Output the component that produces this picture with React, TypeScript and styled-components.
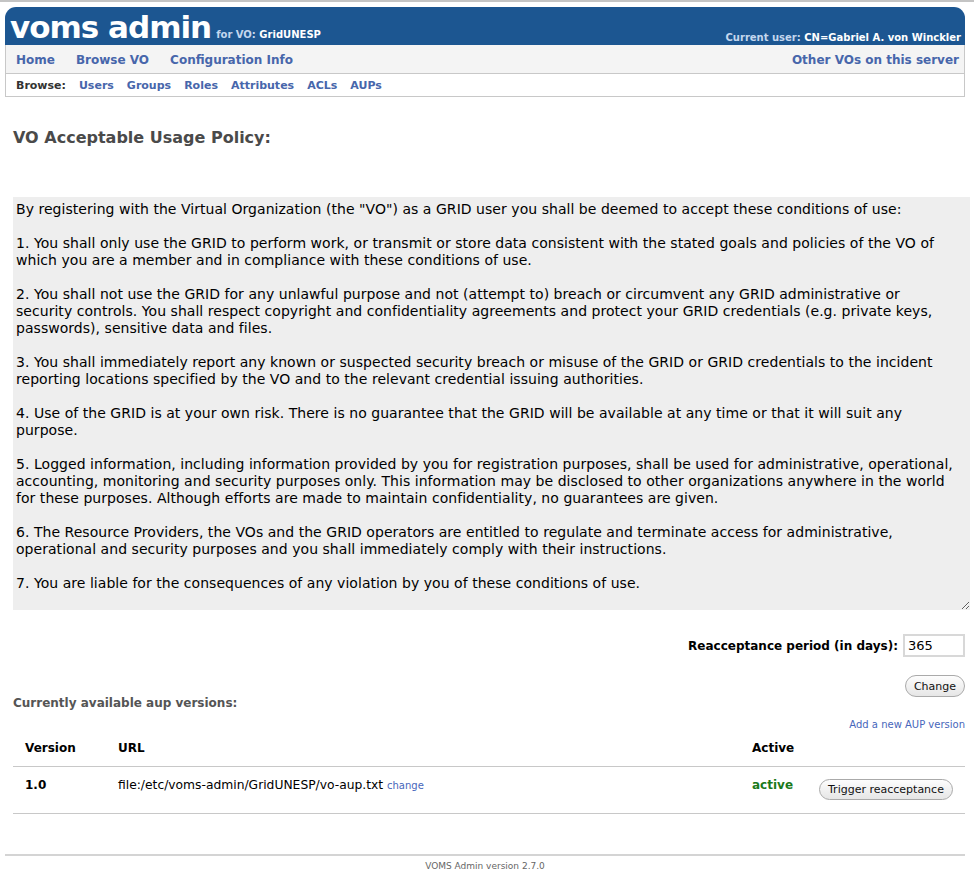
import React from 'react';
import styled, { createGlobalStyle } from 'styled-components';

const GlobalStyle = createGlobalStyle`
  body {
    margin: 0;
    border-top: 2px solid #c4c4c4;
    background: #fff;
    font-family: "DejaVu Sans", Verdana, sans-serif;
    color: #000;
  }
`;

const aupText = `By registering with the Virtual Organization (the "VO") as a GRID user you shall be deemed to accept these conditions of use:

1. You shall only use the GRID to perform work, or transmit or store data consistent with the stated goals and policies of the VO of which you are a member and in compliance with these conditions of use.

2. You shall not use the GRID for any unlawful purpose and not (attempt to) breach or circumvent any GRID administrative or security controls. You shall respect copyright and confidentiality agreements and protect your GRID credentials (e.g. private keys, passwords), sensitive data and files.

3. You shall immediately report any known or suspected security breach or misuse of the GRID or GRID credentials to the incident reporting locations specified by the VO and to the relevant credential issuing authorities.

4. Use of the GRID is at your own risk. There is no guarantee that the GRID will be available at any time or that it will suit any purpose.

5. Logged information, including information provided by you for registration purposes, shall be used for administrative, operational, accounting, monitoring and security purposes only. This information may be disclosed to other organizations anywhere in the world for these purposes. Although efforts are made to maintain confidentiality, no guarantees are given.

6. The Resource Providers, the VOs and the GRID operators are entitled to regulate and terminate access for administrative, operational and security purposes and you shall immediately comply with their instructions.

7. You are liable for the consequences of any violation by you of these conditions of use.`;

const browseLinks = ['Users', 'Groups', 'Roles', 'Attributes', 'ACLs', 'AUPs'];

export default function App() {
  return (
    <>
      <GlobalStyle />
      <Page>
        <Header>
          <Brand>
            <Logo>voms admin</Logo>
            <VoName>
              <Dim>for VO: </Dim>GridUNESP
            </VoName>
          </Brand>
          <UserInfo>
            <Dim>Current user: </Dim>CN=Gabriel A. von Winckler
          </UserInfo>
        </Header>
        <NavBar>
          <NavGroup>
            <NavLink href="#">Home</NavLink>
            <NavLink href="#">Browse VO</NavLink>
            <NavLink href="#">Configuration Info</NavLink>
          </NavGroup>
          <NavLink href="#">Other VOs on this server</NavLink>
        </NavBar>
        <BrowseBar>
          <BrowseLabel>Browse:</BrowseLabel>
          {browseLinks.map((l) => (
            <BrowseLink key={l} href="#">
              {l}
            </BrowseLink>
          ))}
        </BrowseBar>

        <Content>
          <Title>VO Acceptable Usage Policy:</Title>
          <PolicyText readOnly defaultValue={aupText} />

          <PeriodRow>
            <PeriodLabel>Reacceptance period (in days):</PeriodLabel>
            <PeriodInput defaultValue="365" />
          </PeriodRow>
          <ButtonRow>
            <PillButton>Change</PillButton>
          </ButtonRow>

          <SubTitle>Currently available aup versions:</SubTitle>
          <AddRow>
            <SmallLink href="#">Add a new AUP version</SmallLink>
          </AddRow>

          <VersionTable>
            <colgroup>
              <Col $w={93} />
              <Col $w={634} />
              <Col $w={67} />
              <Col $w={158} />
            </colgroup>
            <thead>
              <tr>
                <Th>Version</Th>
                <Th>URL</Th>
                <Th>Active</Th>
                <Th />
              </tr>
            </thead>
            <tbody>
              <tr>
                <Td>
                  <b>1.0</b>
                </Td>
                <Td>
                  <UrlText>file:/etc/voms-admin/GridUNESP/vo-aup.txt</UrlText>{' '}
                  <TinyLink href="#">change</TinyLink>
                </Td>
                <Td>
                  <ActiveText>active</ActiveText>
                </Td>
                <Td>
                  <PillButton $small>Trigger reacceptance</PillButton>
                </Td>
              </tr>
            </tbody>
          </VersionTable>
        </Content>

        <Footer>VOMS Admin version 2.7.0</Footer>
      </Page>
    </>
  );
}

const Page = styled.div`
  width: 960px;
  margin: 5px 0 0 5px;
`;

const Header = styled.div`
  display: flex;
  justify-content: space-between;
  align-items: flex-end;
  height: 38px;
  padding: 0 4px 0 5px;
  background: #1c5691;
  border-radius: 11px 11px 0 0;
  color: #fff;
`;

const Brand = styled.div`
  display: flex;
  align-items: baseline;
`;

const Logo = styled.span`
  font-size: 31px;
  font-weight: bold;
  letter-spacing: -1px;
  line-height: 36px;
`;

const VoName = styled.span`
  margin-left: 5px;
  font-size: 10px;
  font-weight: bold;
`;

const Dim = styled.span`
  color: #c4d7ee;
`;

const UserInfo = styled.div`
  font-size: 10px;
  font-weight: bold;
  padding-bottom: 2px;
`;

const NavBar = styled.div`
  display: flex;
  justify-content: space-between;
  align-items: center;
  height: 28px;
  padding: 1px 5px 0 10px;
  box-sizing: border-box;
  height: 29px;
  background: #f4f4f4;
  border: 1px solid #c8c8c8;
  border-top: none;
`;

const NavGroup = styled.div`
  display: flex;
  gap: 21px;
`;

const NavLink = styled.a`
  font-size: 12px;
  font-weight: bold;
  color: #4766ab;
  text-decoration: none;
`;

const BrowseBar = styled.div`
  display: flex;
  align-items: center;
  gap: 13px;
  height: 22px;
  padding: 0 10px;
  border: 1px solid #c8c8c8;
  border-top: none;
  font-size: 11px;
  font-weight: bold;
`;

const BrowseLabel = styled.span`
  color: #333;
`;

const BrowseLink = styled.a`
  color: #4766ab;
  text-decoration: none;
`;

const Content = styled.div`
  padding: 0 0 0 8px;
`;

const Title = styled.h2`
  margin: 30px 0 0;
  font-size: 16px;
  line-height: 21px;
  color: #4a4a4a;
`;

const PolicyText = styled.textarea`
  display: block;
  box-sizing: border-box;
  width: 957px;
  height: 413px;
  margin: 49px 0 0;
  padding: 4px 17px 4px 3px;
  border: none;
  outline: none;
  background: #eeeeee;
  font-family: "DejaVu Sans", Verdana, sans-serif;
  font-size: 14px;
  line-height: 17px;
  letter-spacing: 0.04px;
  color: #000;
  overflow: hidden;
`;

const PeriodRow = styled.div`
  display: flex;
  justify-content: flex-end;
  align-items: center;
  gap: 5px;
  margin-top: 24px;
`;

const PeriodLabel = styled.span`
  font-size: 12px;
  font-weight: bold;
`;

const PeriodInput = styled.input`
  box-sizing: border-box;
  width: 62px;
  height: 23px;
  padding: 0 3px;
  border: 2px solid #d8d8d8;
  font-family: "DejaVu Sans", Verdana, sans-serif;
  font-size: 13px;
  color: #000;
`;

const ButtonRow = styled.div`
  display: flex;
  justify-content: flex-end;
  margin-top: 18px;
`;

const PillButton = styled.button<{ $small?: boolean }>`
  height: ${(p) => (p.$small ? '21px' : '22px')};
  padding: 0 8px;
  border: 1px solid #aaa;
  border-radius: 11px;
  background: linear-gradient(#fdfdfd, #e6e6e6);
  font-family: "DejaVu Sans", Verdana, sans-serif;
  font-size: 11px;
  color: #111;
  cursor: pointer;
`;

const SubTitle = styled.div`
  margin-top: -1px;
  font-size: 12px;
  font-weight: bold;
  color: #555;
`;

const AddRow = styled.div`
  display: flex;
  justify-content: flex-end;
  margin-top: 9px;
`;

const SmallLink = styled.a`
  font-size: 10px;
  color: #4766bb;
  text-decoration: none;
`;

const VersionTable = styled.table`
  width: 952px;
  margin-top: 2px;
  border-collapse: collapse;
  table-layout: fixed;
`;

const Col = styled.col<{ $w: number }>`
  width: ${(p) => p.$w}px;
`;

const Th = styled.th`
  padding: 9px 0 10px 12px;
  line-height: 15px;
  text-align: left;
  font-size: 12px;
  border-bottom: 1px solid #c8c8c8;
`;

const Td = styled.td`
  height: 47px;
  box-sizing: border-box;
  padding: 11px 0 0 12px;
  line-height: 15px;
  vertical-align: top;
  font-size: 12px;
  border-bottom: 1px solid #c8c8c8;
  white-space: nowrap;

  & button {
    margin-top: 1px;
  }
`;

const UrlText = styled.span`
  font-size: 12.3px;
`;

const TinyLink = styled.a`
  font-size: 10px;
  color: #4766bb;
  text-decoration: none;
`;

const ActiveText = styled.span`
  font-weight: bold;
  color: #1b7a1b;
`;

const Footer = styled.div`
  margin-top: 40px;
  padding-top: 5px;
  border-top: 2px solid #d4d4d4;
  text-align: center;
  font-size: 9px;
  color: #666;
`;
